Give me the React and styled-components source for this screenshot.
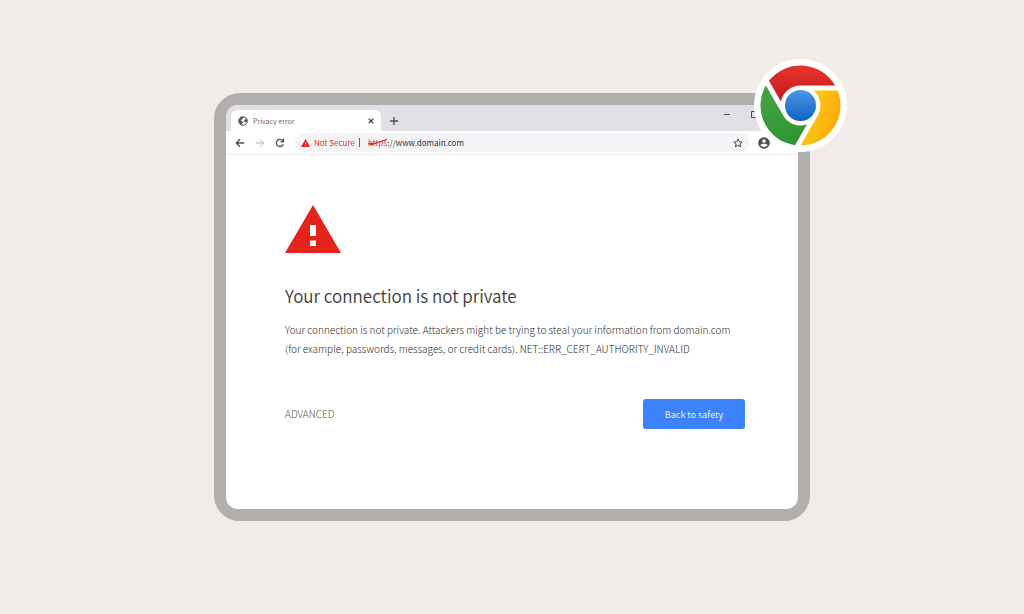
import React from "react";
import styled, { createGlobalStyle } from "styled-components";

const GlobalStyle = createGlobalStyle`
  * { box-sizing: border-box; }
  body {
    margin: 0;
    background: #efecea;
    color: #3c3c3c;
    font-family: "Noto Sans CJK SC", "Open Sans", sans-serif;
  }
  button { font: inherit; }
`;

const Page = styled.main`
  min-height: 100vh;
  display: flex;
  align-items: center;
  justify-content: center;
  padding: 40px;
`;

const Stage = styled.div`
  position: relative;
  width: 100%;
  max-width: 596px;
`;

const Frame = styled.section`
  border: 12px solid #b1aead;
  border-radius: 26px;
  background: #b1aead;
`;

const Screen = styled.div`
  overflow: hidden;
  border-radius: 12px;
  background: #fff;
`;

const TabStrip = styled.header`
  display: flex;
  align-items: flex-end;
  height: 26px;
  padding-left: 5px;
  background: #dfe0e5;
`;

const Tab = styled.div`
  display: flex;
  align-items: center;
  gap: 5px;
  width: 150px;
  height: 21px;
  padding: 0 5px 0 7px;
  border-radius: 6px 6px 0 0;
  background: #fff;
`;

const TabTitle = styled.span`
  flex: 1;
  font-size: 7px;
  line-height: 12px;
  color: #6c6d70;
`;

const IconButton = styled.button`
  display: flex;
  align-items: center;
  justify-content: center;
  width: ${(p) => p.$size}px;
  height: ${(p) => p.$size}px;
  padding: 0;
  border: 0;
  background: none;
  color: ${(p) => p.$color || "#4b4c50"};
  svg { display: block; flex: none; }
`;

const NewTab = styled.div`
  margin-left: 8px;
  padding-bottom: 5px;
`;

const WindowControls = styled.div`
  display: flex;
  gap: 18px;
  margin-left: auto;
  padding: 0 38px 12px 0;
`;

const Toolbar = styled.div`
  display: flex;
  align-items: center;
  height: 24px;
  padding: 0 28px 0 8px;
  border-bottom: 1px solid #ececee;
`;

const NavButtons = styled.nav`
  display: flex;
  gap: 8px;
  margin-right: 9px;
`;

const AddressBar = styled.div`
  display: flex;
  flex: 1;
  align-items: center;
  height: 19px;
  margin-right: 8px;
  padding: 0 7px 0 6px;
  border-radius: 10px;
  background: #f4f4f6;
  font-size: 8px;
  line-height: 12px;
`;

const NotSecure = styled.span`
  margin-left: 4px;
  color: #d8362c;
`;

const Divider = styled.span`
  width: 1px;
  height: 9px;
  margin: 0 8px 0 4px;
  background: #66676b;
`;

const Url = styled.span`
  flex: 1;
  color: #303136;
`;

const Scheme = styled.span`
  position: relative;
  color: #e0504a;
  svg {
    position: absolute;
    left: 0;
    top: 0;
    width: 100%;
    height: 100%;
  }
`;

const Content = styled.article`
  padding: 50px 53px 80px 59px;
`;

const WarningIcon = styled.svg`
  display: block;
  flex: none;
`;

const Title = styled.h1`
  margin: 27px 0 0;
  font-size: 17px;
  line-height: 32px;
  font-weight: 350;
`;

const Message = styled.p`
  margin: 8px 0 0;
  font-size: 10px;
  line-height: 19px;
  font-weight: 300;
  color: #2c2c2c;
`;

const Actions = styled.div`
  display: flex;
  align-items: center;
  justify-content: space-between;
  margin-top: 41px;
`;

const AdvancedButton = styled.button`
  padding: 0;
  border: 0;
  background: none;
  color: #555;
  font-size: 10px;
  font-weight: 300;
  line-height: 14px;
`;

const SafetyButton = styled.button`
  width: 102px;
  height: 30px;
  padding: 0;
  border: 0;
  border-radius: 3px;
  background: #3b82fb;
  color: #e8f0ff;
  font-size: 9px;
`;

const Badge = styled.div`
  position: absolute;
  top: -34px;
  right: -37px;
  width: 93px;
  height: 93px;
  svg { display: block; }
`;

const Stroke = ({ size = 10, width = 1.3, children }) => (
  <svg width={size} height={size} viewBox="0 0 10 10" fill="none" stroke="currentColor" strokeWidth={width} aria-hidden="true">
    {children}
  </svg>
);

const Globe = () => (
  <svg width="10" height="10" viewBox="0 0 10 10" aria-hidden="true">
    <circle cx="5" cy="5" r="4.300" fill="#fff" stroke="#55565a" strokeWidth="1" />
    <path d="M1 4.600 1.300 2.800 3 1 5.800.7 5.200 2.400 3.900 3.100 3.600 4.300 2.300 4.600 4.300 5.200 5 6.500 4.300 7.200 4.200 9 2 8 1 6Z" fill="#55565a" />
    <path d="M7 1.200 9 3.400 9.200 5.600 8.200 6.200 6 5.600 5.600 4.600 7 4.200 7.600 3Z" fill="#55565a" />
  </svg>
);

const Warning = ({ width, height }) => (
  <WarningIcon width={width} height={height} viewBox="0 0 56 48" preserveAspectRatio="none" role="img" aria-label="Warning">
    <path d="M28 0 56 48H0Z" fill="#e4231c" />
    <path d="M25 20h6v11h-6ZM25 35.500h6v5.500h-6Z" fill="#fff" />
  </WarningIcon>
);

const SECTOR = "M13.200 -15H37.100A40 40 0 0 1 0 40L17.300 10A20 20 0 0 0 13.200 -15Z";

const ChromeLogo = () => (
  <svg width="93" height="93" viewBox="-46.500 -46.500 93 93" role="img" aria-label="Chrome">
    <defs>
      <linearGradient id="yellow" gradientUnits="userSpaceOnUse" x1="8" y1="0" x2="38" y2="10">
        <stop offset="0" stopColor="#fcc913" />
        <stop offset="1" stopColor="#fbac0b" />
      </linearGradient>
      <linearGradient id="green" gradientUnits="userSpaceOnUse" x1="10" y1="30" x2="38" y2="-10">
        <stop offset="0" stopColor="#3fa142" />
        <stop offset="1" stopColor="#2f9532" />
      </linearGradient>
      <linearGradient id="red" gradientUnits="userSpaceOnUse" x1="37" y1="20" x2="14" y2="6">
        <stop offset="0" stopColor="#e8382f" />
        <stop offset="1" stopColor="#cf201f" />
      </linearGradient>
      <linearGradient id="blue" x1="0" y1="0" x2="0" y2="1">
        <stop offset="0" stopColor="#4a98e4" />
        <stop offset="1" stopColor="#0f62c4" />
      </linearGradient>
    </defs>
    <circle r="46.500" fill="#fff" />
    <path d={SECTOR} fill="url(#yellow)" />
    <path d={SECTOR} fill="url(#green)" transform="rotate(120)" />
    <path d={SECTOR} fill="url(#red)" transform="rotate(240)" />
    <circle r="15.500" fill="url(#blue)" />
  </svg>
);

export default function App() {
  return (
    <>
      <GlobalStyle />
      <Page>
        <Stage>
          <Frame>
            <Screen>
              <TabStrip>
                <Tab>
                  <Globe />
                  <TabTitle>Privacy error</TabTitle>
                  <IconButton $size={10} aria-label="Close tab">
                    <Stroke width={1.3}><path d="M2.700 2.700 7.300 7.300M7.300 2.700 2.700 7.300" /></Stroke>
                  </IconButton>
                </Tab>
                <NewTab>
                  <IconButton $size={10} aria-label="New tab">
                    <Stroke><path d="M5 1V9M1 5H9" /></Stroke>
                  </IconButton>
                </NewTab>
                <WindowControls>
                  <IconButton $size={10} aria-label="Minimize">
                    <Stroke width={1}><path d="M2 5.500H8" /></Stroke>
                  </IconButton>
                  <IconButton $size={10} aria-label="Maximize">
                    <Stroke width={1}><path d="M1.500 2.500H7.500V8.500H1.500Z" /></Stroke>
                  </IconButton>
                </WindowControls>
              </TabStrip>
              <Toolbar>
                <NavButtons>
                  <IconButton $size={12} aria-label="Back">
                    <Stroke><path d="M9.200 5H1.500M5 1.300 1.300 5 5 8.700" /></Stroke>
                  </IconButton>
                  <IconButton $size={12} $color="#b4b5b8" aria-label="Forward">
                    <Stroke width={1}><path d="M.8 5H8.500M5 1.300 8.700 5 5 8.700" /></Stroke>
                  </IconButton>
                  <IconButton $size={12} aria-label="Reload">
                    <Stroke><path d="M8.300 6.200A3.600 3.600 0 1 1 7.700 2.600M8.500.8V3.800H5.500" /></Stroke>
                  </IconButton>
                </NavButtons>
                <AddressBar>
                  <Warning width={9} height={8} />
                  <NotSecure>Not Secure</NotSecure>
                  <Divider />
                  <Url>
                    <Scheme>
                      https
                      <svg viewBox="0 0 20 12" preserveAspectRatio="none" fill="none" stroke="#e02a22" strokeWidth="1.200" aria-hidden="true">
                        <path d="M0 7.500 8 6.500 2 9 20 2.500" />
                      </svg>
                    </Scheme>
                    ://www.domain.com
                  </Url>
                  <IconButton $size={10} aria-label="Bookmark">
                    <Stroke width={1}><path d="M5 .9 6.200 3.700 9.200 4 6.900 5.900 7.600 8.900 5 7.300 2.400 8.900 3.100 5.900.8 4 3.800 3.700Z" /></Stroke>
                  </IconButton>
                </AddressBar>
                <IconButton $size={12} aria-label="Profile">
                  <svg width="12" height="12" viewBox="0 0 12 12" aria-hidden="true">
                    <circle cx="6" cy="6" r="5.800" fill="#4b4c50" />
                    <circle cx="6" cy="4" r="1.800" fill="#fff" />
                    <path d="M2.300 8.300C3 6.300 9 6.300 9.700 8.300 8 10.500 4 10.500 2.300 8.300Z" fill="#fff" />
                  </svg>
                </IconButton>
              </Toolbar>
              <Content>
                <Warning width={56} height={48} />
                <Title>Your connection is not private</Title>
                <Message>
                  Your connection is not private. Attackers might be trying to steal your information from domain.com
                  <br />
                  (for example, passwords, messages, or credit cards). NET::ERR_CERT_AUTHORITY_INVALID
                </Message>
                <Actions>
                  <AdvancedButton>ADVANCED</AdvancedButton>
                  <SafetyButton>Back to safety</SafetyButton>
                </Actions>
              </Content>
            </Screen>
          </Frame>
          <Badge>
            <ChromeLogo />
          </Badge>
        </Stage>
      </Page>
    </>
  );
}
